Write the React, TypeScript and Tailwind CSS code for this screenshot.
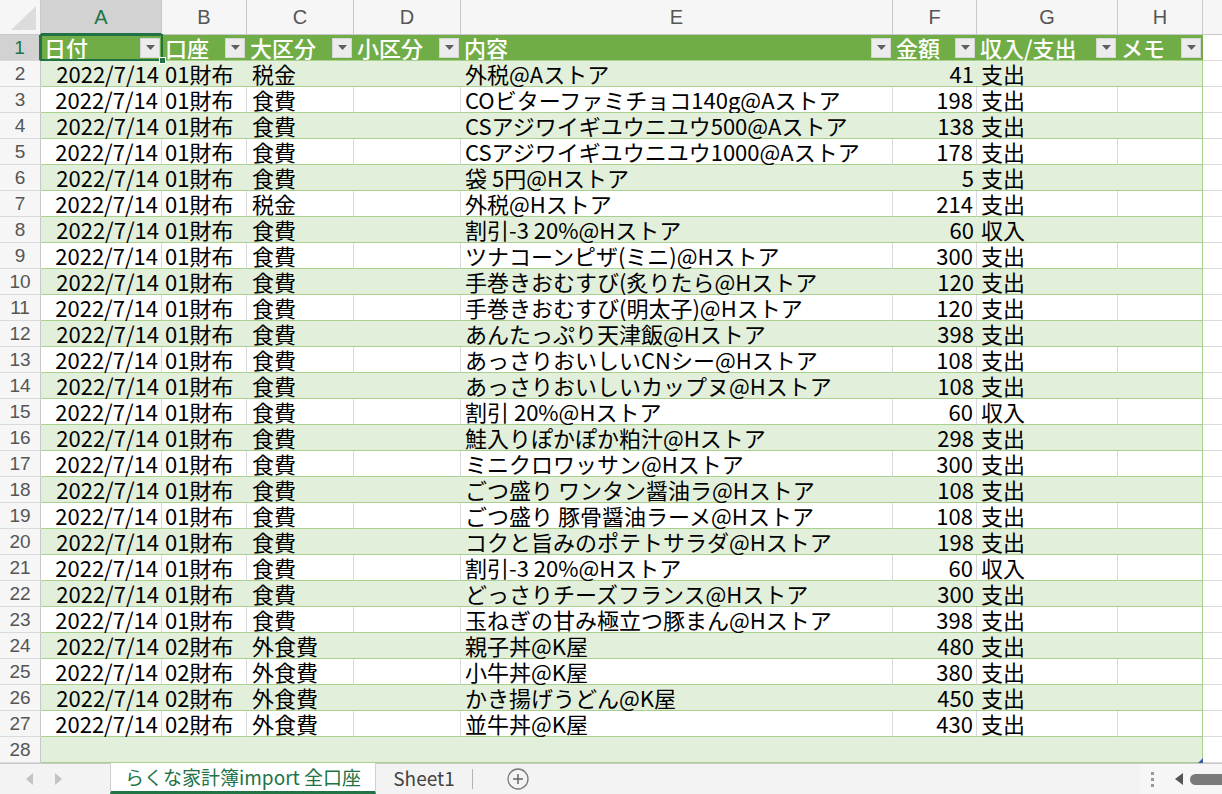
import React from "react";

type Entry = [string, string, string, string, number, string];

const GRID =
  "grid grid-cols-[41px_121px_85px_107px_107px_432px_84px_141px_85px_1fr]";

const entries: Entry[] = [
  ["2022/7/14", "01財布", "税金", "外税@Aストア", 41, "支出"],
  ["2022/7/14", "01財布", "食費", "COビターファミチョコ140g@Aストア", 198, "支出"],
  ["2022/7/14", "01財布", "食費", "CSアジワイギユウニユウ500@Aストア", 138, "支出"],
  ["2022/7/14", "01財布", "食費", "CSアジワイギユウニユウ1000@Aストア", 178, "支出"],
  ["2022/7/14", "01財布", "食費", "袋 5円@Hストア", 5, "支出"],
  ["2022/7/14", "01財布", "税金", "外税@Hストア", 214, "支出"],
  ["2022/7/14", "01財布", "食費", "割引-3 20%@Hストア", 60, "収入"],
  ["2022/7/14", "01財布", "食費", "ツナコーンピザ(ミニ)@Hストア", 300, "支出"],
  ["2022/7/14", "01財布", "食費", "手巻きおむすび(炙りたら@Hストア", 120, "支出"],
  ["2022/7/14", "01財布", "食費", "手巻きおむすび(明太子)@Hストア", 120, "支出"],
  ["2022/7/14", "01財布", "食費", "あんたっぷり天津飯@Hストア", 398, "支出"],
  ["2022/7/14", "01財布", "食費", "あっさりおいしいCNシー@Hストア", 108, "支出"],
  ["2022/7/14", "01財布", "食費", "あっさりおいしいカップヌ@Hストア", 108, "支出"],
  ["2022/7/14", "01財布", "食費", "割引 20%@Hストア", 60, "収入"],
  ["2022/7/14", "01財布", "食費", "鮭入りぽかぽか粕汁@Hストア", 298, "支出"],
  ["2022/7/14", "01財布", "食費", "ミニクロワッサン@Hストア", 300, "支出"],
  ["2022/7/14", "01財布", "食費", "ごつ盛り ワンタン醤油ラ@Hストア", 108, "支出"],
  ["2022/7/14", "01財布", "食費", "ごつ盛り 豚骨醤油ラーメ@Hストア", 108, "支出"],
  ["2022/7/14", "01財布", "食費", "コクと旨みのポテトサラダ@Hストア", 198, "支出"],
  ["2022/7/14", "01財布", "食費", "割引-3 20%@Hストア", 60, "収入"],
  ["2022/7/14", "01財布", "食費", "どっさりチーズフランス@Hストア", 300, "支出"],
  ["2022/7/14", "01財布", "食費", "玉ねぎの甘み極立つ豚まん@Hストア", 398, "支出"],
  ["2022/7/14", "02財布", "外食費", "親子丼@K屋", 480, "支出"],
  ["2022/7/14", "02財布", "外食費", "小牛丼@K屋", 380, "支出"],
  ["2022/7/14", "02財布", "外食費", "かき揚げうどん@K屋", 450, "支出"],
  ["2022/7/14", "02財布", "外食費", "並牛丼@K屋", 430, "支出"],
];

const headers = ["日付", "口座", "大区分", "小区分", "内容", "金額", "収入/支出", "メモ"];
const letters = ["A", "B", "C", "D", "E", "F", "G", "H"];

function FilterButton() {
  return (
    <div className="w-[20px] h-[20px] bg-[#ececec] border border-[#d6d6d6] flex items-center justify-center shrink-0">
      <svg width="9" height="5" viewBox="0 0 9 5">
        <path d="M0 0 L9 0 L4.5 5 Z" fill="#5f5f5f" />
      </svg>
    </div>
  );
}

function RowNumber({ n, selected }: { n: number; selected?: boolean }) {
  return (
    <div
      className={
        "h-[26px] flex items-center justify-center text-[19px] leading-[25px] font-['Liberation_Sans',sans-serif] border-b border-[#dadada] " +
        (selected
          ? "bg-[#d2d2d2] text-[#217346] border-r-2 border-r-[#217346]"
          : "bg-[#f6f6f6] text-[#555] border-r border-r-[#c8c8c8]")
      }
    >
      {n}
    </div>
  );
}

function DataRow({ e, n }: { e: Entry; n: number }) {
  const green = n % 2 === 0;
  const bg = green ? "bg-[#e2efda]" : "bg-white";
  const cell =
    "h-[26px] flex leading-[25px] whitespace-nowrap border-b border-[#a9d08e] " +
    bg +
    (green ? "" : " border-r border-r-[#dadada]");
  return (
    <div className={GRID}>
      <RowNumber n={n} />
      <div className={cell + " justify-end pr-[3px]"}>{e[0]}</div>
      <div className={cell + " pl-[3px]"}>{e[1]}</div>
      <div className={cell + " pl-[5px]"}>{e[2]}</div>
      <div className={cell}></div>
      <div className={cell + " pl-[4px]"}>{e[3]}</div>
      <div className={cell + " justify-end pr-[3px]"}>{e[4]}</div>
      <div className={cell + " pl-[4px]"}>{e[5]}</div>
      <div
        className={
          "h-[26px] border-b border-[#a9d08e] border-r border-r-[#a9d08e] " + bg
        }
      ></div>
      <div className="h-[26px] border-b border-[#dadada] bg-white"></div>
    </div>
  );
}

function ColumnLetters() {
  return (
    <div className={GRID + " h-[35px]"}>
      <div className="h-[35px] bg-[#f6f6f6] border-b border-r border-[#c8c8c8] flex items-end justify-end p-[3px]">
        <svg width="28" height="26" viewBox="0 0 28 26">
          <path d="M27 1 L27 25 L2 25 Z" fill="#dcdcdc" />
        </svg>
      </div>
      {letters.map((l, i) => (
        <div
          key={l}
          className={
            "h-[35px] flex items-center justify-center text-[20px] font-['Liberation_Sans',sans-serif] " +
            (i === 0
              ? "bg-[#d2d2d2] text-[#217346] border-b-2 border-b-[#217346] border-r border-r-[#c8c8c8]"
              : "bg-[#f6f6f6] text-[#555] border-b border-r border-[#c8c8c8]")
          }
        >
          {l}
        </div>
      ))}
      <div className="h-[35px] bg-[#f6f6f6] border-b border-[#c8c8c8]"></div>
    </div>
  );
}

function HeaderRow() {
  return (
    <div className={GRID + " relative"}>
      <RowNumber n={1} selected />
      {headers.map((h) => (
        <div
          key={h}
          className="h-[26px] bg-[#70ad47] text-white font-medium flex items-center justify-between pl-[3px] pr-[2px] leading-[25px] border-b border-[#a9d08e] whitespace-nowrap"
        >
          <span>{h}</span>
          <FilterButton />
        </div>
      ))}
      <div className="h-[26px] border-b border-[#dadada] bg-white"></div>
      {/* active cell A1 */}
      <div className="absolute left-[40px] top-[-1px] w-[123px] h-[27px] border-2 border-[#217346] pointer-events-none">
        <div className="absolute right-[-5px] bottom-[-5px] w-[7px] h-[7px] bg-[#217346] border border-white"></div>
      </div>
    </div>
  );
}

function LastRow() {
  return (
    <div className={GRID}>
      <RowNumber n={28} />
      <div className="col-span-8 h-[26px] bg-[#e2efda] border-b border-[#a9d08e] border-r border-r-[#a9d08e] relative">
        <svg className="absolute right-[-1px] bottom-[-1px]" width="5" height="5" viewBox="0 0 5 5">
          <path d="M5 0 L5 5 L0 5 Z" fill="#3b5aa8" />
        </svg>
      </div>
      <div className="h-[26px] border-b border-[#dadada] bg-white"></div>
    </div>
  );
}

function TabBar() {
  return (
    <div className="flex-1 bg-[#f3f3f3] border-t border-[#c8c8c8] flex items-stretch font-['Noto_Sans_CJK_JP',sans-serif] relative">
      <div className="w-[110px] flex items-center gap-[20px] pl-[26px]">
        <svg width="8" height="12" viewBox="0 0 8 12">
          <path d="M7 0 L7 12 L0 6 Z" fill="#c4c4c4" />
        </svg>
        <svg width="8" height="12" viewBox="0 0 8 12">
          <path d="M1 0 L1 12 L8 6 Z" fill="#c4c4c4" />
        </svg>
      </div>
      <div className="w-[266px] bg-white border-r border-l border-[#d0d0d0] border-b-[3px] border-b-[#217346] mt-[-1px] flex items-center justify-center text-[19px] text-[#217346] leading-[24px]">
        らくな家計簿import 全口座
      </div>
      <div className="w-[96px] flex items-center justify-center text-[19px] text-[#444] leading-[24px] pb-[2px]">
        Sheet1
      </div>
      <div className="w-px bg-[#b4b4b4] my-[5px]"></div>
      <div className="w-[90px] flex items-center justify-center">
        <svg width="22" height="22" viewBox="0 0 22 22">
          <circle cx="11" cy="11" r="10" fill="none" stroke="#777" strokeWidth="1.3" />
          <path d="M11 6 L11 16 M6 11 L16 11" stroke="#666" strokeWidth="1.5" />
        </svg>
      </div>
      <div className="flex-1"></div>
      <div className="w-[82px] flex items-center bg-[#f6f6f6]">
        <div className="flex flex-col gap-[3px] ml-[11px]">
          <div className="w-[3px] h-[3px] bg-[#9a9a9a]"></div>
          <div className="w-[3px] h-[3px] bg-[#9a9a9a]"></div>
          <div className="w-[3px] h-[3px] bg-[#9a9a9a]"></div>
        </div>
        <svg className="ml-[21px]" width="8" height="12" viewBox="0 0 8 12">
          <path d="M8 0 L8 12 L0 6 Z" fill="#555" />
        </svg>
        <div className="ml-[7px] flex-1 h-[11px] rounded-l-full bg-[#7a7a7a]"></div>
      </div>
    </div>
  );
}

export default function App() {
  return (
    <div className="w-[1222px] h-[794px] overflow-hidden bg-white flex flex-col text-[22px] text-black font-['Noto_Sans_CJK_JP',sans-serif]">
      <ColumnLetters />
      <HeaderRow />
      {entries.map((e, i) => (
        <DataRow key={i} e={e} n={i + 2} />
      ))}
      <LastRow />
      <TabBar />
    </div>
  );
}
